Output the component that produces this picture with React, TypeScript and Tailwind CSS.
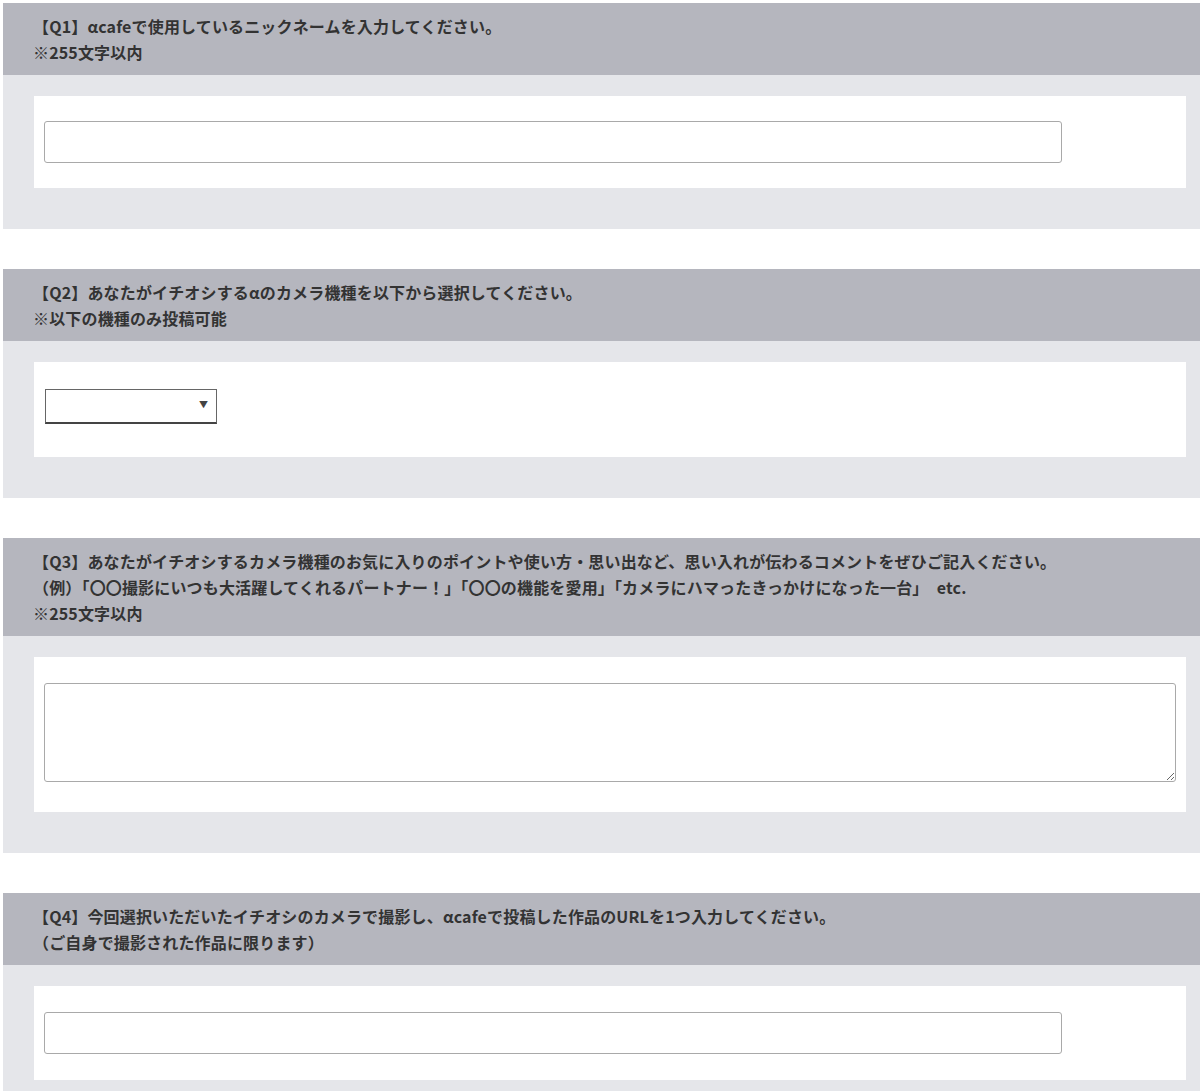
import React from 'react';

interface QuestionProps {
  lines: string[];
  children: React.ReactNode;
}

function Question({ lines, children }: QuestionProps) {
  return (
    <section className="mb-[40px]">
      <div className="bg-[#b5b6be] pl-[30px] pr-4 py-[10px] text-[16px] leading-[26px] tracking-[0.16px] font-bold text-[#333]">
        {lines.map((l, i) => (
          <p key={i} className="whitespace-pre">{l}</p>
        ))}
      </div>
      <div className="bg-[#e5e6ea] pt-[21px] pb-[41px] pl-[31px] pr-[14px]">
        <div className="bg-white px-[10px]">{children}</div>
      </div>
    </section>
  );
}

export default function App() {
  return (
    <div
      className="min-h-[1091px] bg-white pt-[3px] pl-[3px]"
      style={{ fontFamily: '"Noto Sans CJK JP", "Noto Sans", sans-serif' }}
    >
      <Question
        lines={[
          '【Q1】αcafeで使用しているニックネームを入力してください。',
          '※255文字以内',
        ]}
      >
        <div className="py-[25px]">
          <input
            type="text"
            className="block w-[1018px] h-[42px] border border-[#a9a9a9] rounded-[3px] bg-white px-2 outline-none"
          />
        </div>
      </Question>

      <Question
        lines={[
          '【Q2】あなたがイチオシするαのカメラ機種を以下から選択してください。',
          '※以下の機種のみ投稿可能',
        ]}
      >
        <div className="pt-[27px] pb-[33px] pl-px">
          <div className="relative w-[172px] h-[35px] border border-[#666] border-b-2 border-b-[#444] bg-white">
            <span className="absolute right-[8px] top-[10px] text-[9px] leading-[9px] text-[#444]">▼</span>
          </div>
        </div>
      </Question>

      <Question
        lines={[
          '【Q3】あなたがイチオシするカメラ機種のお気に入りのポイントや使い方・思い出など、思い入れが伝わるコメントをぜひご記入ください。',
          '（例）「〇〇撮影にいつも大活躍してくれるパートナー！」「〇〇の機能を愛用」「カメラにハマったきっかけになった一台」　etc.',
          '※255文字以内',
        ]}
      >
        <div className="pt-[26px] pb-[30px]">
          <textarea className="block w-full h-[99px] border border-[#a9a9a9] rounded-[3px] bg-white p-2 outline-none" />
        </div>
      </Question>

      <Question
        lines={[
          '【Q4】今回選択いただいたイチオシのカメラで撮影し、αcafeで投稿した作品のURLを1つ入力してください。',
          '（ご自身で撮影された作品に限ります）',
        ]}
      >
        <div className="py-[26px]">
          <input
            type="text"
            className="block w-[1018px] h-[42px] border border-[#a9a9a9] rounded-[3px] bg-white px-2 outline-none"
          />
        </div>
      </Question>
    </div>
  );
}
